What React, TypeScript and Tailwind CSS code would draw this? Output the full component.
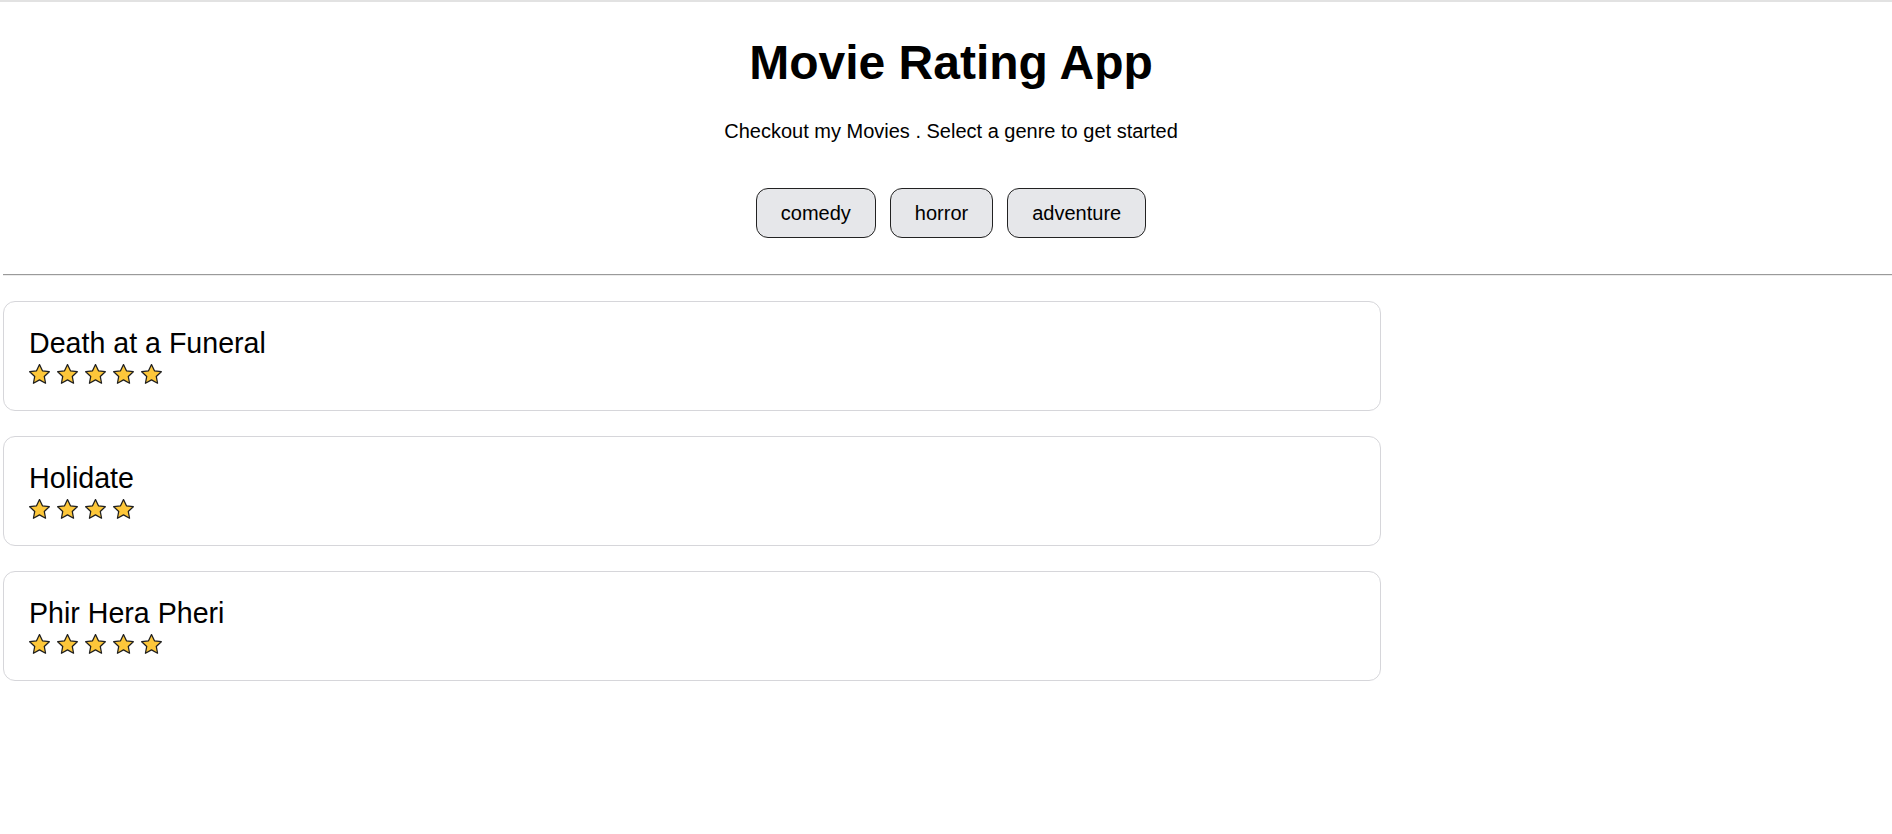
const genres = ["comedy", "horror", "adventure"];

const movies = [
  { name: "Death at a Funeral", rating: 5 },
  { name: "Holidate", rating: 4 },
  { name: "Phir Hera Pheri", rating: 5 },
];

function Star() {
  return (
    <svg width="21" height="21" viewBox="1.2 1.2 21.6 21.6">
      <path
        d="M12 1.8l3.05 6.45 7.05.9-5.2 4.85 1.35 7L12 17.55 5.75 21l1.35-7L1.9 9.15l7.05-.9z"
        fill="#fdc73a"
        stroke="#1f1f1f"
        strokeWidth="1.3"
        strokeLinejoin="round"
      />
    </svg>
  );
}

export default function App() {
  return (
    <div className="min-h-[834px] border-t-2 border-[#e2e2e2] bg-white font-['Liberation_Sans',Arial,sans-serif] text-black">
      <div className="flex flex-col items-center pl-[10px]">
        <h1 className="mt-[33px] text-[48px] font-bold leading-[56px]">
          Movie Rating App
        </h1>
        <p className="mt-[29px] text-[20px] leading-[23px]">
          Checkout my Movies . Select a genre to get started
        </p>
        <div className="mt-[45px] flex gap-[14px]">
          {genres.map((genre) => (
            <button
              key={genre}
              className="h-[50px] rounded-[12px] border border-[#222] bg-[#e6e7ea] px-[24px] text-[20px] leading-[23px]"
            >
              {genre}
            </button>
          ))}
        </div>
      </div>

      <div className="ml-[3px] mt-[36px] border-t border-b border-t-[#9a9a9a] border-b-[#ececec]" />

      <div className="mt-[25px] flex w-[1381px] flex-col gap-[25px] pl-[3px]">
        {movies.map((movie) => (
          <div
            key={movie.name}
            className="h-[110px] rounded-[12px] border border-[#d6d6da] px-[25px] pt-[25px]"
          >
            <div className="text-[28.6px] leading-[32px]">{movie.name}</div>
            <div className="mt-[5px] flex gap-[7px]">
              {Array.from({ length: movie.rating }).map((_, i) => (
                <Star key={i} />
              ))}
            </div>
          </div>
        ))}
      </div>
    </div>
  );
}
